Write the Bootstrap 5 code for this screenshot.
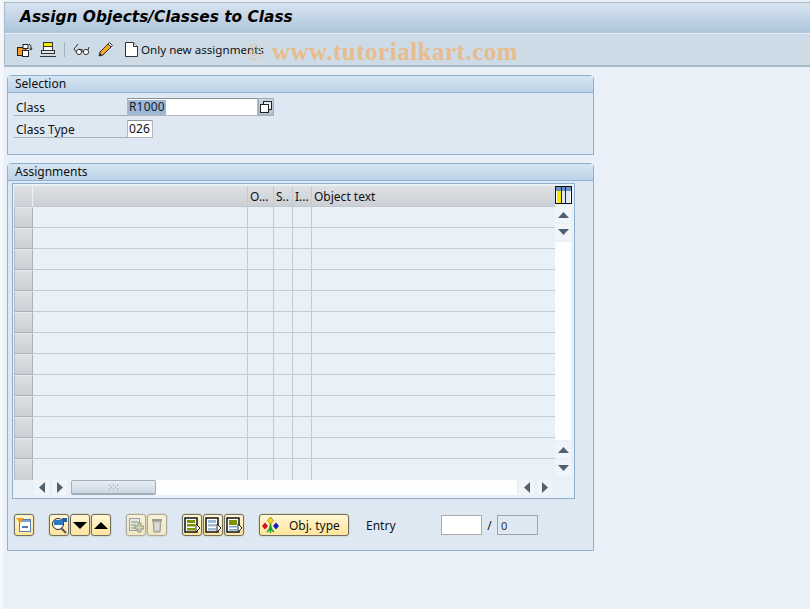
<!DOCTYPE html>
<html lang="en">
<head>
<meta charset="utf-8">
<title>Assign Objects/Classes to Class</title>
<link rel="stylesheet" href="https://cdn.jsdelivr.net/npm/bootstrap@5.3.0/dist/css/bootstrap.min.css">
<script src="https://cdn.jsdelivr.net/npm/bootstrap@5.3.0/dist/js/bootstrap.bundle.min.js"></script>
<style>
html,body{margin:0;background:#e9f0f8;}
body{width:810px;height:609px;overflow:hidden;font-family:"Noto Sans",sans-serif;font-size:12px;color:#111;line-height:1;}
.sap-page{position:relative;width:810px;height:609px;padding:2px 0 0 4px;background:linear-gradient(90deg,#f4f7fb 0,#f4f7fb 3px,#e9f0f8 4px);}
.sap-title{height:31px;border-top:1px solid #a9b6c4;border-left:1px solid #a9bccf;background:linear-gradient(#d8e4f0,#adc4da);font:italic bold 15.4px "DejaVu Sans",sans-serif;color:#000;padding:0 0 3px 15px;}
.sap-tools{height:34px;border-top:1px solid #e6edf4;border-bottom:2px solid #a9b8c7;border-left:1px solid #a9bccf;background:#cddbe7;padding-left:12px;}
.ico-a{margin-right:7px;}
.ico-pen{margin:0 12px 0 8px;}
.tool-txt{margin-left:3px;font-size:11.6px;}
.sep{width:1px;height:15px;background:#9fb2c4;margin:0 8px;}
.pnl{width:587px;margin-left:3px;border:1px solid #8fb1cf;border-radius:4px 4px 0 0;background:#dde8f2;}
.pnl-a{height:80px;margin-top:8px;}
.pnl-b{height:388px;margin-top:8px;}
.pnl-head{height:17px;background:linear-gradient(#d7e5f2,#bcd3e8);border-bottom:1px solid #8fb1cf;padding:0 0 0 7px;color:#111;}
.frm-row{height:18px;padding-left:6px;}
.frm-first{margin-top:5px;}
.frm-lbl{width:113px;height:18px;border-bottom:1px solid #a3b1bf;padding:2px 0 0 2px;display:flex;align-items:center;}
.fld{height:18px;border:1px solid #b5b7b8;border-top-color:#8e9092;background:#fff;font-size:12px;letter-spacing:.15px;padding:2px 1px;}
.fld-cls{width:131px;padding-left:0;}
.fld-typ{width:26px;}
.hilite{background:#9db7d5;color:#16202c;display:inline-block;height:15px;margin-top:-1px;padding:1px 1px 0;}
.f4{width:16px;height:18px;border:1px solid #a3adb8;background:linear-gradient(#c9d8e8,#aebfd3);}
.grid-box{width:563px;height:316px;margin:2px 0 0 4px;border:1px solid #8fb1cf;background:#e8f0f8;padding:2px 0 0 1px;}
.grid-tbl{border-collapse:separate;border-spacing:0;table-layout:fixed;width:541px;}
.grid-tbl th,.grid-tbl td{padding:0;height:21px;border-right:1px solid #c2cad4;border-bottom:1px solid #c4ccd6;font-weight:400;}
.grid-tbl th{background:linear-gradient(#dfe1e3,#ccd0d5);padding:2px 0 0 2px;height:21px;overflow:hidden;white-space:nowrap;color:#111;border-bottom-color:#c0c8d0;}
.grid-tbl th.blank,.grid-tbl th.corner{padding:0;}
.grid-tbl th.obj-col{border-right:0;}
.grid-tbl td:last-child{border-right:0;}
.grid-tbl th.corner{border-right:1px solid #e8f0f8;}
.grid-tbl td.sel{background:linear-gradient(#dde0e3,#cbcfd4);border:1px solid #a9b2bb;border-top-color:#e6eaee;border-left-color:#b4bcc5;}
.grid-tbl tr:last-child td{border-bottom:0;}
.v-bar{width:19px;}
.cfg{height:20px;margin-bottom:1px;}
.sb-btn{width:16px;height:16px;background:#f1f5fa;}
.v-gap{margin-top:1px;}
.v-gap2{margin-top:2px;}
.sb-track{width:16px;height:198px;background:#fcfdfe;margin:2px 0;}
.h-bar{height:15px;padding-left:20px;}
.thumb{width:85px;height:15px;margin-left:1px;border:1px solid #a3adb8;border-bottom-width:2px;border-radius:2px;background:linear-gradient(#e6edf4,#cbd7e3);}
.h-track{width:361px;height:15px;margin-right:2px;background:#fcfdfe;}
.h-bar .sb-btn{width:15px;height:15px;margin-right:3px;}
.act{height:52px;padding:15px 0 0 6px;}
.ibtn{width:20px;height:22px;border:1px solid #6f6e62;border-radius:3px;background:linear-gradient(#fff6d3,#ffe59c);margin-right:1px;box-shadow:0 0 0 .5px #cfc9a8;}
.ibtn.off{border-color:#aaa99e;background:linear-gradient(#f7f1d8,#f0e7c2);}
.gap-l{margin-left:14px;}
.txtbtn{width:90px;padding:1px 0 0 29px;color:#111;white-space:nowrap;}
.ent-lbl{margin-left:16px;width:75px;padding-top:6px;}
.ent{width:41px;height:20px;margin-top:1px;border:1px solid #a9aaa9;background:#fff;}
.ent-off{width:41px;height:20px;margin-top:1px;border:1px solid #a2a3a3;background:#dde8f2;font-size:11px;padding:4px 3px;color:#333;}
.slash{width:15px;text-align:center;padding-top:6px;}
.wmark{position:absolute;left:272px;top:38px;font:bold 25px "Liberation Serif",serif;letter-spacing:.5px;color:#e8bc8c;white-space:nowrap;}
.wcirc{position:absolute;left:246px;top:44px;width:16px;height:16px;border:1px solid #e9c7a2;border-radius:50%;color:#e8bc8c;font-size:11px;text-align:center;line-height:14px;}
.obj-ico{position:absolute;left:2px;top:1px;}
svg{display:block;}
</style>
</head>
<body>
<div class="sap-page">
  <div class="sap-title d-flex align-items-center">Assign Objects/Classes to Class</div>
  <div class="sap-tools d-flex align-items-center">
    <svg class="ico-a" width="16" height="16" viewBox="0 0 16 16"><rect x="0.500" y="5.500" width="8" height="8" fill="#f59a1e" stroke="#222"/><rect x="5.500" y="8.500" width="6" height="6" fill="#fff" stroke="#222"/><rect x="6" y="2.500" width="5" height="4" fill="#fff" stroke="#222"/><path d="M12 2q3 1 2 5M12.500 7l1.500 1 1-2" fill="none" stroke="#222"/></svg>
    <svg width="16" height="16" viewBox="0 0 16 16"><rect x="3.500" y="0.500" width="9" height="4" fill="#f7e800" stroke="#333"/><rect x="3.500" y="4.500" width="9" height="4" fill="#fff" stroke="#333"/><rect x="1.500" y="8.500" width="13" height="3" fill="#e4e4e4" stroke="#333"/><path d="M0 14.500h16" stroke="#333"/></svg>
    <div class="sep"></div>
    <svg width="17" height="14" viewBox="0 0 17 14"><path d="M5 1 1 6l3 4 3-2-1-2 4 1" fill="none" stroke="#333"/><circle cx="6" cy="9" r="2.600" fill="#fff" stroke="#333"/><circle cx="13" cy="9" r="2.600" fill="#fff" stroke="#333"/><path d="M8.500 8.500h2M15 7l1-3" stroke="#333" fill="none"/></svg>
    <svg class="ico-pen" width="15" height="15" viewBox="0 0 15 15"><path d="M1 14l1-4L10 2l3 3-8 8z" fill="#f5a623" stroke="#333"/><path d="M10 2l1.500-1.500 3 3L13 5z" fill="#e8e8e8" stroke="#333"/><path d="M1 14l1-3 2 2z" fill="#222"/></svg>
    <svg width="13" height="15" viewBox="0 0 13 15"><path d="M.5.500h8l4 4v10H.5z" fill="#fff" stroke="#333"/><path d="M8.500.500v4h4" fill="#dfe8f0" stroke="#333"/></svg>
    <span class="tool-txt">Only new assignments</span>
  </div>

  <div class="pnl pnl-a">
    <div class="pnl-head d-flex align-items-center">Selection</div>
    <div class="frm-row frm-first d-flex">
      <div class="frm-lbl">Class</div>
      <div class="fld fld-cls"><span class="hilite">R1000</span></div>
      <div class="f4 d-flex align-items-center justify-content-center"><svg width="12" height="12" viewBox="0 0 12 12"><rect x="3.500" y=".5" width="8" height="8" fill="#e8eef5" stroke="#222"/><rect x=".5" y="3.500" width="8" height="8" fill="#fff" stroke="#222"/></svg></div>
    </div>
    <div class="frm-row d-flex mt-1">
      <div class="frm-lbl">Class Type</div>
      <div class="fld fld-typ">026</div>
    </div>
  </div>

  <div class="pnl pnl-b">
    <div class="pnl-head d-flex align-items-center">Assignments</div>
    <div class="grid-box">
      <div class="d-flex">
        <table class="grid-tbl">
          <colgroup><col style="width:19px"><col style="width:215px"><col style="width:26px"><col style="width:19px"><col style="width:19px"><col style="width:243px"></colgroup>
          <thead><tr><th class="corner"></th><th class="blank"></th><th>O...</th><th>S..</th><th>I...</th><th class="obj-col">Object text</th></tr></thead>
          <tbody>
          <tr><td class="sel"></td><td></td><td></td><td></td><td></td><td></td></tr>
          <tr><td class="sel"></td><td></td><td></td><td></td><td></td><td></td></tr>
          <tr><td class="sel"></td><td></td><td></td><td></td><td></td><td></td></tr>
          <tr><td class="sel"></td><td></td><td></td><td></td><td></td><td></td></tr>
          <tr><td class="sel"></td><td></td><td></td><td></td><td></td><td></td></tr>
          <tr><td class="sel"></td><td></td><td></td><td></td><td></td><td></td></tr>
          <tr><td class="sel"></td><td></td><td></td><td></td><td></td><td></td></tr>
          <tr><td class="sel"></td><td></td><td></td><td></td><td></td><td></td></tr>
          <tr><td class="sel"></td><td></td><td></td><td></td><td></td><td></td></tr>
          <tr><td class="sel"></td><td></td><td></td><td></td><td></td><td></td></tr>
          <tr><td class="sel"></td><td></td><td></td><td></td><td></td><td></td></tr>
          <tr><td class="sel"></td><td></td><td></td><td></td><td></td><td></td></tr>
          <tr><td class="sel"></td><td></td><td></td><td></td><td></td><td></td></tr>
          </tbody>
        </table>
        <div class="v-bar">
          <div class="cfg"><svg width="17" height="18" viewBox="0 0 17 18"><rect x=".5" y=".5" width="16" height="17" fill="#fff" stroke="#111" stroke-width="1"/><rect x="1" y="1" width="15" height="4" fill="#6d8fc0"/><rect x="2" y="5" width="4" height="12" fill="#f7e600"/><rect x="7" y="5" width="3" height="12" fill="#dfe7ef"/><rect x="11" y="5" width="4" height="12" fill="#dfe7ef"/><path d="M6.500 1v16M10.500 1v16" stroke="#222"/></svg></div>
          <div class="sb-btn v-gap d-flex align-items-center justify-content-center"><svg width="11" height="6" viewBox="0 0 11 6"><path d="M5.500 0 11 6H0z" fill="#4f6172"/></svg></div>
          <div class="sb-btn v-gap d-flex align-items-center justify-content-center"><svg width="11" height="6" viewBox="0 0 11 6"><path d="M0 0h11L5.500 6z" fill="#4f6172"/></svg></div>
          <div class="sb-track"></div>
          <div class="sb-btn d-flex align-items-center justify-content-center"><svg width="11" height="6" viewBox="0 0 11 6"><path d="M5.500 0 11 6H0z" fill="#4f6172"/></svg></div>
          <div class="sb-btn v-gap2 d-flex align-items-center justify-content-center"><svg width="11" height="6" viewBox="0 0 11 6"><path d="M0 0h11L5.500 6z" fill="#4f6172"/></svg></div>
        </div>
      </div>
      <div class="h-bar d-flex">
        <div class="sb-btn d-flex align-items-center justify-content-center"><svg width="6" height="11" viewBox="0 0 6 11"><path d="M6 0v11L0 5.500z" fill="#4f6172"/></svg></div>
        <div class="sb-btn d-flex align-items-center justify-content-center"><svg width="6" height="11" viewBox="0 0 6 11"><path d="M0 0v11l6-5.500z" fill="#4f6172"/></svg></div>
        <div class="thumb d-flex align-items-center justify-content-center"><svg width="9" height="6" viewBox="0 0 9 6"><path d="M0 1h1M4 1h1M8 1h1M0 5h1M4 5h1M8 5h1M2 3h1M6 3h1" stroke="#8a97a5"/></svg></div>
        <div class="h-track"></div>
        <div class="sb-btn d-flex align-items-center justify-content-center"><svg width="6" height="11" viewBox="0 0 6 11"><path d="M6 0v11L0 5.500z" fill="#4f6172"/></svg></div>
        <div class="sb-btn d-flex align-items-center justify-content-center"><svg width="6" height="11" viewBox="0 0 6 11"><path d="M0 0v11l6-5.500z" fill="#4f6172"/></svg></div>
      </div>
    </div>
    <div class="act d-flex align-items-start">
      <div class="ibtn d-flex align-items-center justify-content-center"><svg width="16" height="16" viewBox="0 0 16 16"><rect x="3.500" y="2.500" width="11" height="12" fill="#fff" stroke="#5a7ea8"/><rect x="4" y="3" width="10" height="2" fill="#7fa0c6"/><path d="M6 10h6" stroke="#1d4f94" stroke-width="1.500"/><path d="M0 1h8L4 6z" fill="#f59a1e"/></svg></div>
      <div class="ibtn gap-l d-flex align-items-center justify-content-center"><svg width="17" height="17" viewBox="0 0 17 17"><circle cx="7" cy="7" r="5.500" fill="#fff" stroke="#222"/><rect x="3" y="3" width="9" height="5" fill="#2f78c4"/><rect x="11" y="1" width="5" height="4" fill="#1d5fa8"/><path d="M10 11l5 5" stroke="#555" stroke-width="2"/></svg></div>
      <div class="ibtn d-flex align-items-center justify-content-center"><svg width="14" height="7" viewBox="0 0 14 7"><path d="M0 0h14L7 7z" fill="#000"/></svg></div>
      <div class="ibtn d-flex align-items-center justify-content-center"><svg width="14" height="7" viewBox="0 0 14 7"><path d="M7 0l7 7H0z" fill="#000"/></svg></div>
      <div class="ibtn off gap-l d-flex align-items-center justify-content-center"><svg width="16" height="16" viewBox="0 0 16 16"><rect x="1.500" y="1.500" width="10" height="12" fill="#e6e8ec" stroke="#9a9f96"/><path d="M3 5h7M3 8h5M3 11h4" stroke="#b7bf9e" stroke-width="2"/><path d="M10 6h3v3h3v3h-3v3h-3v-3H7V9h3z" fill="#cfd4b0" stroke="#8f9884"/></svg></div>
      <div class="ibtn off d-flex align-items-center justify-content-center"><svg width="12" height="16" viewBox="0 0 12 16"><path d="M1 3h10" stroke="#9a9a95" stroke-width="2"/><path d="M2 4h8l-1 11H3z" fill="#c9c9c4" stroke="#9a9a95"/><path d="M5 6v7M7 6v7" stroke="#eee"/></svg></div>
      <div class="ibtn gap-l d-flex align-items-center justify-content-center"><svg width="17" height="16" viewBox="0 0 17 16"><rect x="1" y="1" width="12" height="14" fill="#fff" stroke="#111" stroke-width="1.500"/><rect x="3" y="3" width="8" height="3" fill="#7d9400"/><rect x="3" y="7" width="8" height="2.500" fill="#7d9400"/><rect x="3" y="11" width="8" height="2.500" fill="#7d9400"/><path d="M12 7l4 4-4 4z" fill="#fff" stroke="#222"/></svg></div>
      <div class="ibtn d-flex align-items-center justify-content-center"><svg width="17" height="16" viewBox="0 0 17 16"><rect x="1" y="1" width="12" height="14" fill="#fff" stroke="#111" stroke-width="1.500"/><rect x="3" y="3" width="8" height="3" fill="#9fbbd3"/><rect x="3" y="7" width="8" height="2.500" fill="#9fbbd3"/><rect x="3" y="11" width="8" height="2.500" fill="#9fbbd3"/><path d="M12 7l4 4-4 4z" fill="#fff" stroke="#222"/></svg></div>
      <div class="ibtn d-flex align-items-center justify-content-center"><svg width="17" height="16" viewBox="0 0 17 16"><rect x="1" y="1" width="12" height="14" fill="#fff" stroke="#111" stroke-width="1.500"/><rect x="3" y="3" width="8" height="5" fill="#7d9400"/><rect x="3" y="9" width="8" height="1.500" fill="#7fa0c6"/><rect x="3" y="12" width="8" height="1.500" fill="#7fa0c6"/><path d="M12 7l4 4-4 4z" fill="#fff" stroke="#222"/></svg></div>
      <div class="ibtn txtbtn gap-l d-flex align-items-center position-relative">
        <svg class="obj-ico" width="17" height="18" viewBox="0 0 17 18"><path d="M8.500 8c0 4-1 6-3.500 8M8.500 8c0 4 1 6 3.500 8M8.500 8v9" fill="none" stroke="#1c9c2a" stroke-width="1.500"/><path d="M8.500 1l3 3.500-3 3.500-3-3.500z" fill="#f7d800" stroke="#444" stroke-width=".5"/><path d="M3 6.500l3 3.500-3 3.500L0 10z" fill="#d8101a"/><path d="M14 6.500l3 3.500-3 3.500-3-3.500z" fill="#1020c8"/></svg>
        Obj. type
      </div>
      <div class="ent-lbl">Entry</div>
      <div class="ent"></div>
      <div class="slash">/</div>
      <div class="ent-off">0</div>
    </div>
  </div>

  <div class="wcirc">©</div>
  <div class="wmark">www.tutorialkart.com</div>
</div>
</body>
</html>
